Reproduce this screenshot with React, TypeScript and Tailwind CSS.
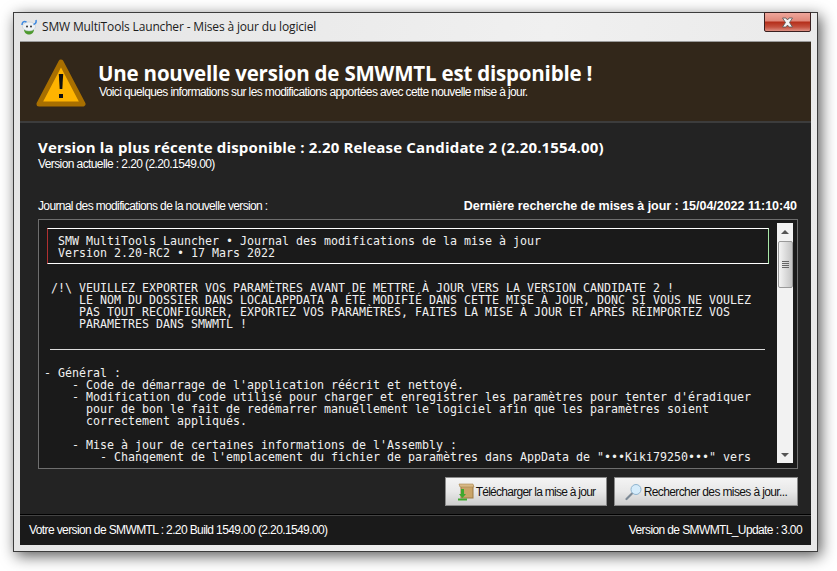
const UI = "font-['Liberation_Sans',Arial,sans-serif]"
const HEAD = "font-['Open_Sans','Noto_Sans',sans-serif]"

function AppIcon() {
  return (
    <svg width="16" height="16" viewBox="0 0 16 16" className="shrink-0">
      <path d="M3 10c0 4 2.500 5.500 5 5.500s5-1.500 5-5.500z" fill="#4e9a2e" />
      <ellipse cx="8" cy="7.500" rx="6.500" ry="4.500" fill="#eef2f5" stroke="#b5c0c8" strokeWidth="0.500" />
      <path d="M1 6C1 3 3 1.500 5.500 3M15 1c.5 2.500-.5 4-2.500 4.500" fill="none" stroke="#3f8ae0" strokeWidth="1.500" />
      <circle cx="6" cy="7.500" r="1" fill="#333" />
      <circle cx="10" cy="7.500" r="1" fill="#333" />
    </svg>
  )
}

function WarningIcon() {
  return (
    <svg width="50" height="50" viewBox="0 0 50 50" className="shrink-0">
      <path
        d="M25 5 L47 47 H3 Z"
        fill="#ffb400"
        stroke="#a86f00"
        strokeWidth="5"
        strokeLinejoin="round"
      />
      <path d="M22.800 17H27.200L26.300 32H23.700Z" fill="#111" />
      <rect x="23" y="37" width="4" height="4" fill="#111" />
    </svg>
  )
}

function CloseButton() {
  return (
    <div className="w-[47px] h-[20px] -mt-[1px] border border-[#3a2020] rounded-b-[2px] bg-[linear-gradient(#efa69b_0%,#e08a7c_42%,#b5301c_52%,#c4513f_78%,#dd8f82_100%)] flex items-center justify-center shrink-0">
      <svg width="13" height="11" viewBox="0 0 13 11">
        <path
          d="M1.500 1H5L6.500 3 8 1H11.500L8.500 5.500 11.500 10H8L6.500 8 5 10H1.500L4.500 5.500Z"
          fill="#f4f4f4"
          stroke="#555"
          strokeWidth="0.800"
        />
      </svg>
    </div>
  )
}

function BoxIcon() {
  return (
    <svg width="18" height="18" viewBox="0 0 18 18" className="shrink-0">
      <rect x="4" y="3" width="12" height="12" fill="#c9a468" stroke="#9c7a45" />
      <path d="M2 1h14l1 3H3z" fill="#d8b986" stroke="#a8854f" strokeWidth="0.600" />
      <path d="M4 6h3v5h2l-3.500 4L2 11h2z" fill="#3fa82e" />
      <rect x="1" y="15.500" width="9" height="2" fill="#3fa82e" />
    </svg>
  )
}

function SearchIcon() {
  return (
    <svg width="18" height="18" viewBox="0 0 18 18" className="shrink-0">
      <path d="M7 10.500 1.500 16" stroke="#7d8a96" strokeWidth="2.200" strokeLinecap="round" />
      <circle cx="11" cy="6.500" r="5" fill="#d5ecfb" stroke="#8fb4cf" />
    </svg>
  )
}

function ActionButton({ icon, label, className }: { icon: React.ReactNode; label: string; className: string }) {
  return (
    <div
      className={`${className} h-[29px] border border-[#8a8a8a] bg-[linear-gradient(#f4f4f4,#e8e8e8_50%,#cdcdcd)] flex items-center justify-center gap-[1px] text-[#111] text-[12px]`}
    >
      {icon}
      <span>{label}</span>
    </div>
  )
}

function ScrollBar() {
  return (
    <div className="w-[16px] shrink-0 bg-[#f2f2f2] flex flex-col items-center">
      <div className="h-[18px] shrink-0 flex items-center justify-center">
        <div className="w-0 h-0 border-x-[4px] border-x-transparent border-b-[4px] border-b-[#555]" />
      </div>
      <div className="w-[15px] h-[47px] border border-[#9a9a9a] rounded-[2px] bg-[linear-gradient(90deg,#f4f4f4,#dcdcdc_50%,#c4c4c4)] flex flex-col items-center justify-center gap-[1px]">
        <div className="w-[7px] h-[1px] bg-[#666]" />
        <div className="w-[7px] h-[1px] bg-[#666]" />
        <div className="w-[7px] h-[1px] bg-[#666]" />
        <div className="w-[7px] h-[1px] bg-[#666]" />
      </div>
      <div className="flex-1" />
      <div className="h-[17px] shrink-0 flex items-center justify-center">
        <div className="w-0 h-0 border-x-[4px] border-x-transparent border-t-[4px] border-t-[#555]" />
      </div>
    </div>
  )
}

const WARNING = `/!\\ VEUILLEZ EXPORTER VOS PARAMÈTRES AVANT DE METTRE À JOUR VERS LA VERSION CANDIDATE 2 !
    LE NOM DU DOSSIER DANS LOCALAPPDATA A ÉTÉ MODIFIÉ DANS CETTE MISE À JOUR, DONC SI VOUS NE VOULEZ
    PAS TOUT RECONFIGURER, EXPORTEZ VOS PARAMÈTRES, FAITES LA MISE À JOUR ET APRÈS RÉIMPORTEZ VOS
    PARAMÈTRES DANS SMWMTL !`

const CHANGES = `- Général :
    - Code de démarrage de l'application réécrit et nettoyé.
    - Modification du code utilisé pour charger et enregistrer les paramètres pour tenter d'éradiquer
      pour de bon le fait de redémarrer manuellement le logiciel afin que les paramètres soient
      correctement appliqués.

    - Mise à jour de certaines informations de l'Assembly :
        - Changement de l'emplacement du fichier de paramètres dans AppData de "•••Kiki79250•••" vers`

export default function App() {
  return (
    <div className={`w-[837px] h-[571px] bg-white overflow-hidden pl-[13px] pt-[12px] ${UI}`}>
      <div className="w-[805px] h-[540px] border border-[#3c3c3c] bg-[linear-gradient(100deg,#e4e4e4,#f0f0f0_60%,#e8e8e8)] shadow-[3px_4px_14px_rgba(0,0,0,0.65)] flex flex-col px-[6px] pb-[6px]">
        {/* Title bar */}
        <div className="h-[28px] shrink-0 flex items-start justify-between">
          <div className="flex items-center gap-[5px] pl-[1px] h-[27px] text-[#1c1c1c] text-[12px] tracking-[-0.16px] font-['Open_Sans',sans-serif]">
            <AppIcon />
            <span>SMW MultiTools Launcher - Mises à jour du logiciel</span>
          </div>
          <CloseButton />
        </div>

        <div className="flex-1 min-h-0 flex flex-col bg-[#232323] border-t border-[#9a9a9a] text-white">
          {/* Header banner */}
          <div className="h-[81px] shrink-0 bg-[#32271a] border-b-2 border-[#3c3c3c] flex items-center pl-[16px] gap-[12px]">
            <WarningIcon />
            <div className="flex flex-col pb-[4px]">
              <span className={`${HEAD} font-bold text-[20.5px] leading-[25px] tracking-[-0.2px]`}>
                Une nouvelle version de SMWMTL est disponible !
              </span>
              <span className="text-[12px] leading-[13px] tracking-[-0.62px] pl-[1px]">
                Voici quelques informations sur les modifications apportées avec cette nouvelle mise à jour.
              </span>
            </div>
          </div>

          {/* Body */}
          <div className="flex-1 min-h-0 flex flex-col pl-[18px] pr-[13px]">
            <div className={`${HEAD} font-bold text-[15px] leading-[20px] mt-[14px] tracking-[0.17px]`}>
              Version la plus récente disponible : 2.20 Release Candidate 2 (2.20.1554.00)
            </div>
            <div className="text-[12px] leading-[13px] mt-[1px] tracking-[-0.6px]">
              Version actuelle : 2.20 (2.20.1549.00)
            </div>

            <div className="flex justify-between items-center mt-[26px] h-[18px]">
              <span className="text-[12px] tracking-[-0.64px]">Journal des modifications de la nouvelle version :</span>
              <span className="text-[12.5px] font-bold tracking-[-0.03px] pr-px">Dernière recherche de mises à jour : 15/04/2022 11:10:40</span>
            </div>

            {/* Changelog */}
            <div className="mt-[4px] h-[250px] shrink-0 border border-[#6e6e6e] bg-[#1a1a1a] flex pt-[3px] pb-[5px] pr-[4px]">
              <div className="flex-1 min-w-0 overflow-hidden font-['DejaVu_Sans_Mono',monospace] text-[11.63px] leading-[12px] text-[#f0f0f0] pl-[4px] whitespace-pre">
                <div className="ml-[4px] mr-[8px] mt-[5px] h-[36px] border border-white border-l-[#b03030] border-r-[#a8e8a8] pl-[10px] pt-[6px]">
                  {'SMW MultiTools Launcher • Journal des modifications de la mise à jour\nVersion 2.20-RC2 • 17 Mars 2022'}
                </div>
                <div className="mt-[18px] pl-[8px]">{WARNING}</div>
                <div className="mt-[19px] ml-[7px] mr-[12px] h-px bg-[#dcdcdc]" />
                <div className="mt-[17px] pl-[1px]">{CHANGES}</div>
              </div>
              <ScrollBar />
            </div>

            {/* Actions */}
            <div className="flex justify-end gap-[7px] mt-[8px]">
              <ActionButton icon={<BoxIcon />} label="Télécharger la mise à jour" className="w-[162px] tracking-[-0.73px]" />
              <ActionButton icon={<SearchIcon />} label="Rechercher des mises à jour..." className="w-[184px] tracking-[-0.62px]" />
            </div>
          </div>

          {/* Status bar */}
          <div className="h-[31px] shrink-0 bg-[#1a1a1a] border-t border-t-black shadow-[inset_0_1px_0_#444] flex items-center justify-between pl-[9px] pr-[9px] text-[12px] tracking-[-0.61px]">
            <span>Votre version de SMWMTL : 2.20 Build 1549.00 (2.20.1549.00)</span>
            <span>Version de SMWMTL_Update : 3.00</span>
          </div>
        </div>
      </div>
    </div>
  )
}
